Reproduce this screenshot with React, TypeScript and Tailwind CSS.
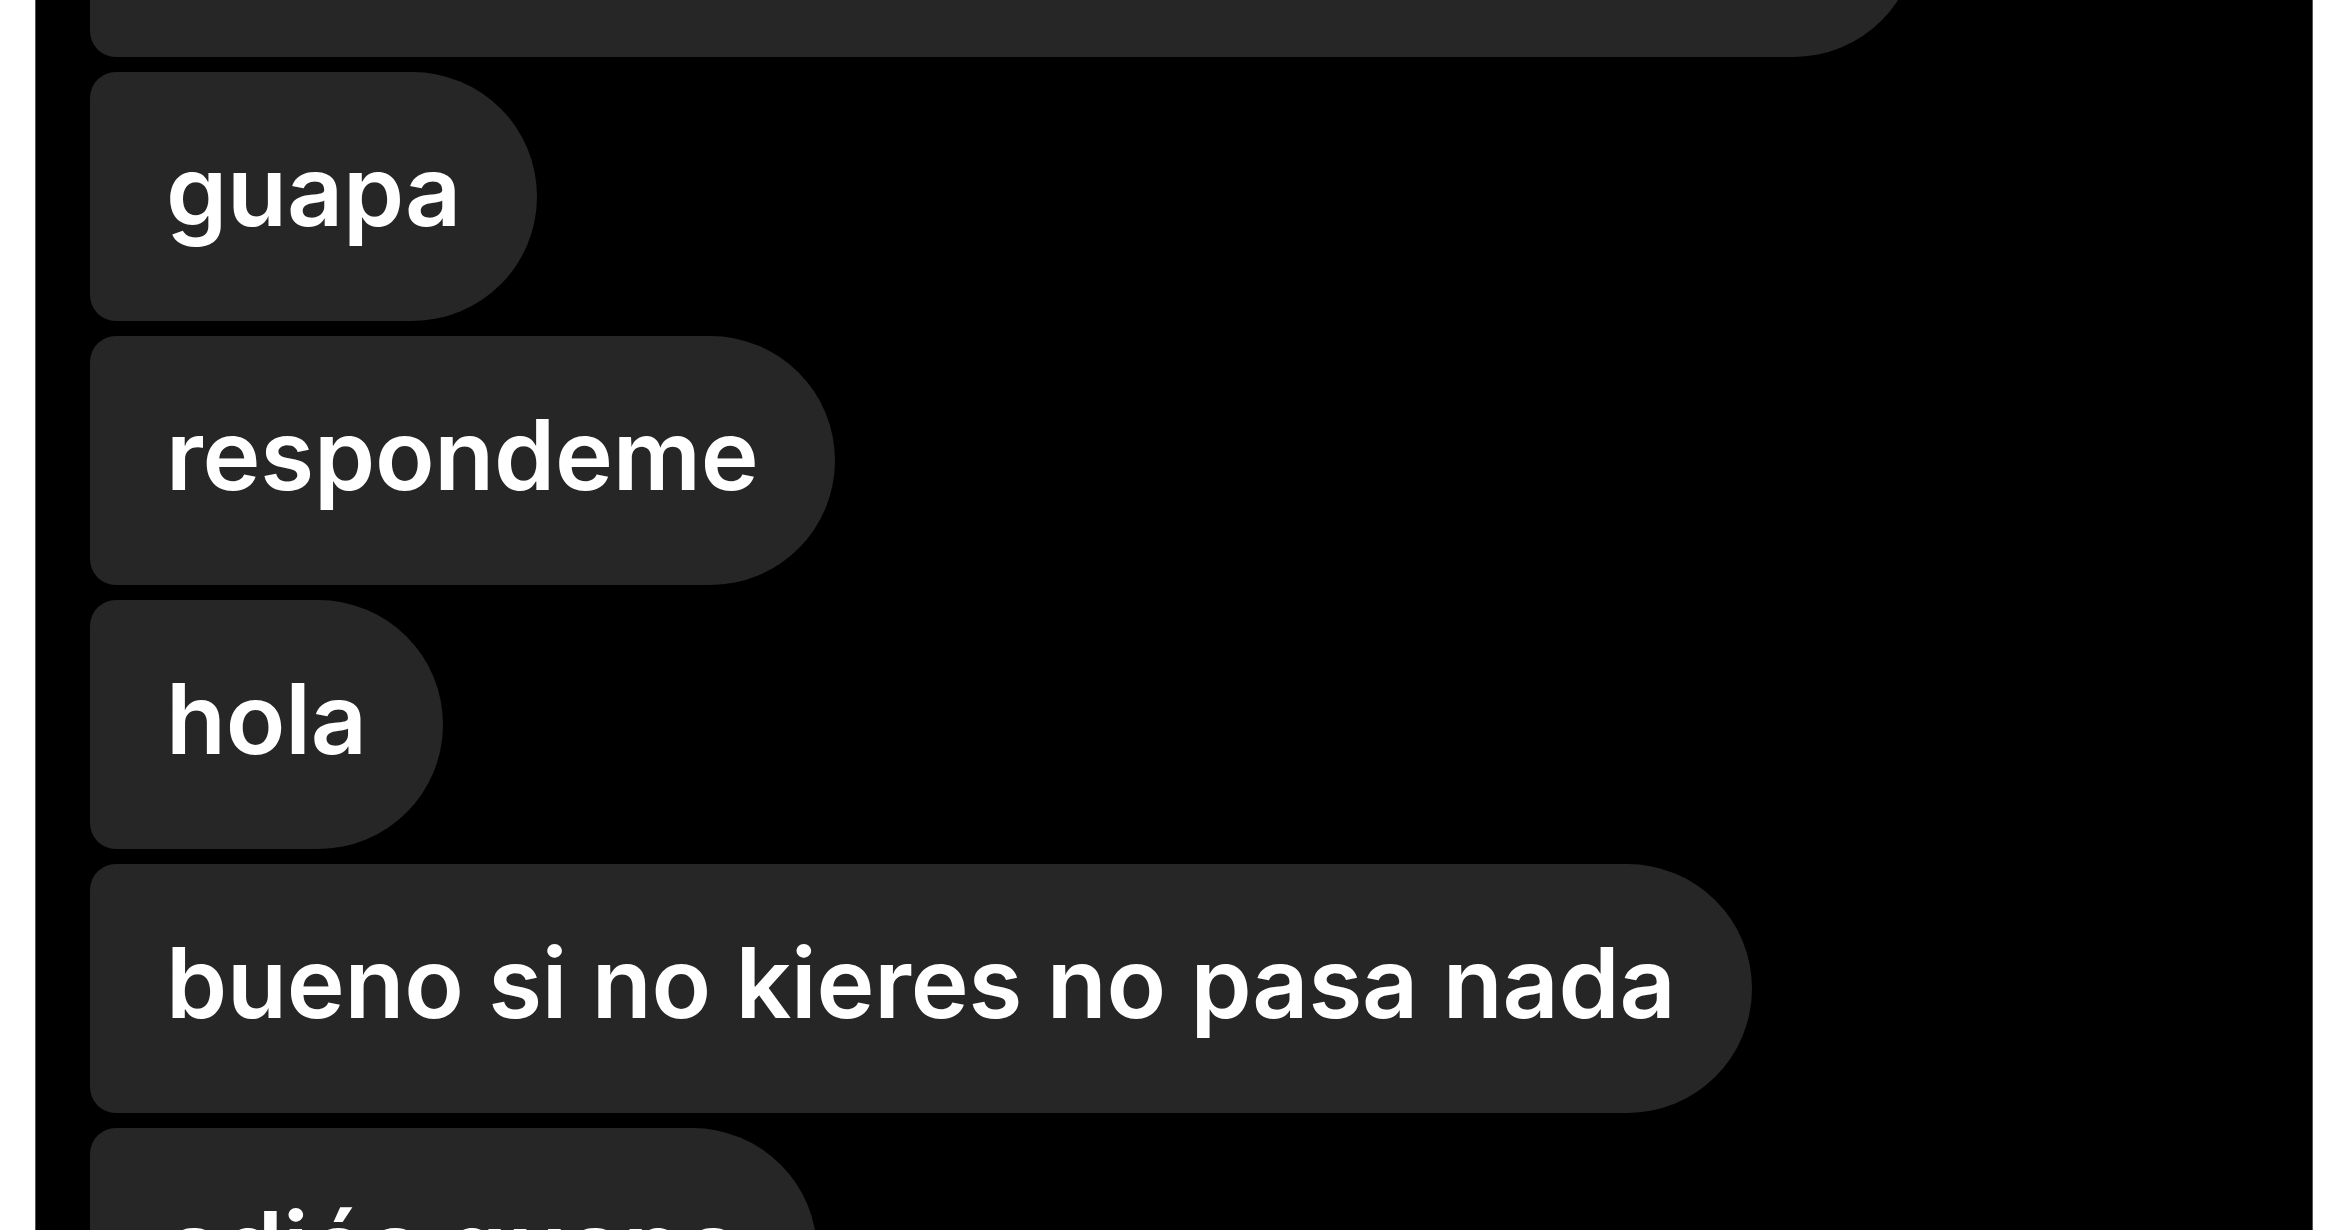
const messages = ["guapa", "respondeme", "hola", "bueno si no kieres no pasa nada", "adiós guapa"]

const Bubble = ({ text }: { text: string }) => (
    <div className="self-start h-[249px] shrink-0 flex items-center bg-[#262626] rounded-l-[26px] rounded-r-[125px] px-[76px] pb-[12px]">
        <span className="text-white text-[98px] font-semibold leading-none whitespace-nowrap tracking-[-0.2px]">{text}</span>
    </div>
)

export default function App() {
    return (
        <div className="w-[2350px] h-[1230px] bg-white overflow-hidden flex" style={{ fontFamily: "Inter, 'Noto Sans', sans-serif" }}>
            <div className="ml-[35px] mr-[37px] flex-1 bg-black border-x border-[#555] overflow-hidden">
                <div className="flex flex-col gap-[15px] pl-[54px] -mt-[192px]">
                    <div className="h-[249px] w-[1828px] shrink-0 bg-[#262626] rounded-l-[26px] rounded-r-[125px]" />
                    {messages.map((m) => (
                        <Bubble key={m} text={m} />
                    ))}
                </div>
            </div>
        </div>
    )
}
